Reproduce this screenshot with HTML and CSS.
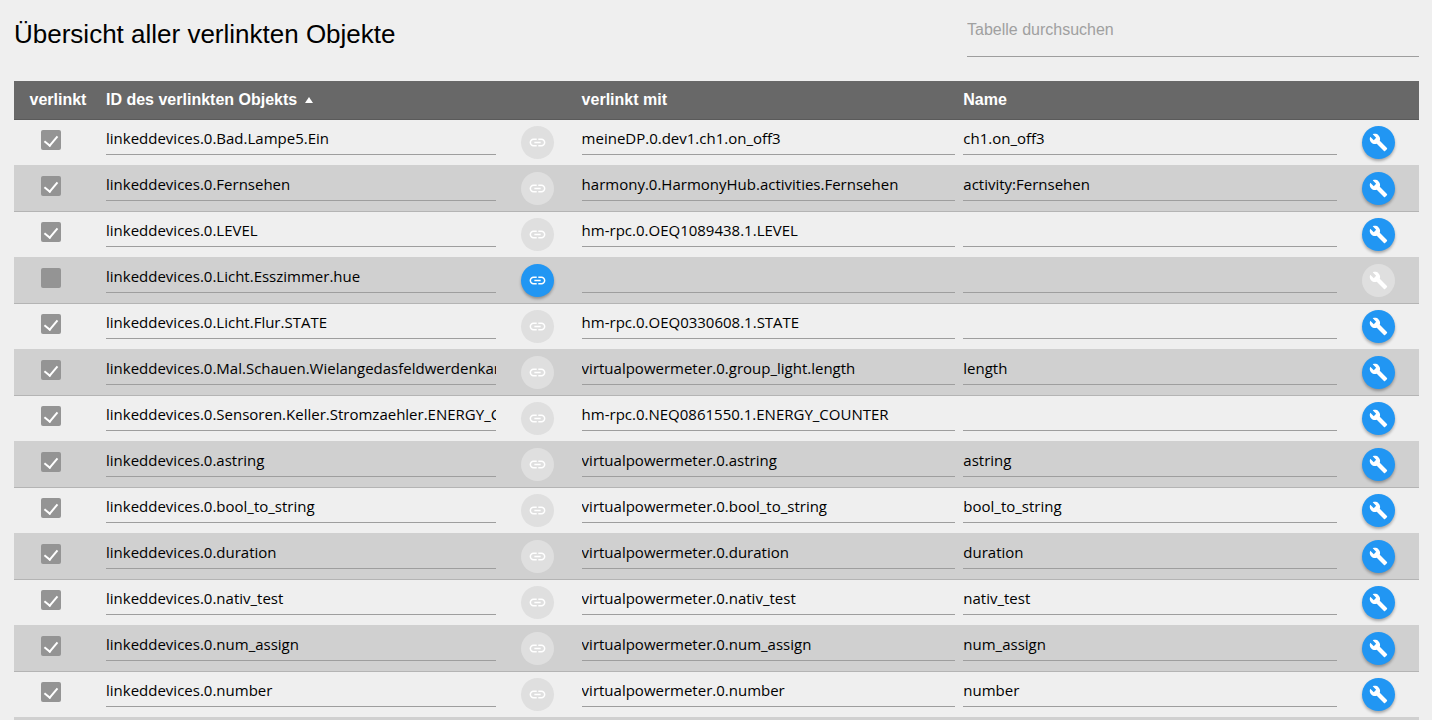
FILE: index.html
```html
<!DOCTYPE html>
<html lang="de">
<head>
<meta charset="utf-8">
<title>Übersicht aller verlinkten Objekte</title>
<link rel="stylesheet" href="styles.css">
</head>
<body>
<svg class="sprite" aria-hidden="true">
  <symbol id="icon-link" viewBox="0 0 24 24"><path d="M3.9 12c0-1.71 1.39-3.1 3.1-3.1h4V7H7c-2.76 0-5 2.24-5 5s2.24 5 5 5h4v-1.9H7c-1.71 0-3.1-1.39-3.1-3.1zM8 13h8v-2H8v2zm9-6h-4v1.9h4c1.71 0 3.1 1.39 3.1 3.1s-1.39 3.1-3.1 3.1h-4V17h4c2.76 0 5-2.24 5-5s-2.24-5-5-5z"/></symbol>
  <symbol id="icon-build" viewBox="0 0 24 24"><path d="M22.7 19l-9.1-9.1c.9-2.3.4-5-1.5-6.9-2-2-5-2.4-7.4-1.3L9 6 6 9 1.6 4.7C.4 7.1.9 10.1 2.9 12.1c1.9 1.9 4.6 2.4 6.9 1.5l9.1 9.1c.4.4 1 .4 1.4 0l2.3-2.3c.5-.4.5-1.1.1-1.4z"/></symbol>
  <symbol id="icon-check" viewBox="0 0 20 20"><path d="M4 11l4 4 8-9" fill="none" stroke="#fff" stroke-width="2"/></symbol>
</svg>
<header class="page-header">
  <h1 class="title">Übersicht aller verlinkten Objekte</h1>
  <input class="search" type="search" placeholder="Tabelle durchsuchen" aria-label="Tabelle durchsuchen">
</header>
<main>
  <table class="objects">
    <colgroup>
      <col class="col-check"><col class="col-id"><col class="col-action"><col><col><col class="col-action">
    </colgroup>
    <thead>
      <tr>
        <th class="head-check" scope="col">verlinkt</th>
        <th scope="col" aria-sort="ascending"><span class="sorted">ID des verlinkten Objekts<svg class="sort-arrow" viewBox="0 0 8 6" aria-hidden="true"><path d="M4 0l4 6H0z"/></svg></span></th>
        <td></td>
        <th scope="col">verlinkt mit</th>
        <th scope="col">Name</th>
        <td></td>
      </tr>
    </thead>
    <tbody id="rows"></tbody>
  </table>
</main>
<script src="app.js"></script>
</body>
</html>
```

FILE: styles.css
```css
* {
  box-sizing: border-box;
}

body {
  height: 100vh;
  margin: 0;
  padding: 12px 13px 0 14px;
  overflow: hidden;
  background: #efefef;
  color: #000;
  font-family: "Liberation Sans", Arial, sans-serif;
  font-size: 16px;
}

.sprite {
  display: none;
}

.page-header {
  display: flex;
  justify-content: space-between;
  height: 69px;
}

.title {
  margin: 0;
  font-size: 26px;
  font-weight: 400;
  line-height: 44px;
}

.search {
  width: 452px;
  height: 45px;
  padding: 0 0 8px;
  border: 0;
  border-bottom: 1px solid #9e9e9e;
  background: transparent;
  font: inherit;
  outline: 0;
}

.search::placeholder {
  color: #a0a0a0;
}

.objects {
  width: 100%;
  table-layout: fixed;
  border-collapse: separate;
  border-spacing: 0;
}

.col-check {
  width: 88px;
}

.col-id {
  width: 28.3%;
}

.col-action {
  width: 78px;
}

.objects thead {
  color: #fff;
}

.objects thead th,
.objects thead td {
  height: 39px;
  padding: 0 4px;
  border-bottom: 1px solid #5a5a5a;
  background: #686868;
  text-align: left;
}

.objects thead .head-check {
  text-align: center;
}

.sorted {
  display: flex;
  align-items: center;
  gap: 8px;
}

.sort-arrow {
  width: 8px;
  height: 6px;
  fill: #fff;
}

.objects tbody td {
  height: 46px;
  padding: 6px 4px 0;
  border-bottom: 1px solid #d0d0d0;
  vertical-align: top;
}

.objects tbody tr:nth-child(even) td {
  border-bottom-color: #b4b4b4;
  background: #d0d0d0;
}

.objects tbody .cell-check {
  padding: 10px 0 0 27px;
}

.objects tbody .cell-action {
  padding: 6px 0 0 21px;
}

.check {
  display: grid;
  place-items: center;
  width: 20px;
  height: 20px;
  margin: 0;
  border-radius: 2px;
  background: #949494;
  appearance: none;
}

.check:checked::before {
  content: "";
  width: 6px;
  height: 11px;
  margin-bottom: 1px;
  border: solid #fff;
  border-width: 0 2px 2px 0;
  transform: rotate(40deg);
}

.field {
  display: block;
  width: 100%;
  height: 29px;
  padding: 0 0 5px;
  border: 0;
  border-bottom: 1px solid #9e9e9e;
  background: transparent;
  color: #000;
  font-family: "Open Sans", "Noto Sans", sans-serif;
  font-size: 15px;
  outline: 0;
}

.round {
  display: grid;
  place-items: center;
  width: 33px;
  height: 33px;
  padding: 0;
  border: 0;
  border-radius: 50%;
  background: #2196f3;
  box-shadow: 0 2px 3px rgba(0, 0, 0, 0.3);
  cursor: pointer;
}

.round:disabled {
  background: #dfdfdf;
  box-shadow: none;
  cursor: default;
}

.icon {
  width: 19px;
  height: 19px;
  fill: #fff;
}
```

FILE: app.js
```javascript
const objects = [
  ["Bad.Lampe5.Ein", "meineDP.0.dev1.ch1.on_off3", "ch1.on_off3"],
  ["Fernsehen", "harmony.0.HarmonyHub.activities.Fernsehen", "activity:Fernsehen"],
  ["LEVEL", "hm-rpc.0.OEQ1089438.1.LEVEL", ""],
  ["Licht.Esszimmer.hue", "", ""],
  ["Licht.Flur.STATE", "hm-rpc.0.OEQ0330608.1.STATE", ""],
  ["Mal.Schauen.Wielangedasfeldwerdenkann", "virtualpowermeter.0.group_light.length", "length"],
  ["Sensoren.Keller.Stromzaehler.ENERGY_COUNTER", "hm-rpc.0.NEQ0861550.1.ENERGY_COUNTER", ""],
  ["astring", "virtualpowermeter.0.astring", "astring"],
  ["bool_to_string", "virtualpowermeter.0.bool_to_string", "bool_to_string"],
  ["duration", "virtualpowermeter.0.duration", "duration"],
  ["nativ_test", "virtualpowermeter.0.nativ_test", "nativ_test"],
  ["num_assign", "virtualpowermeter.0.num_assign", "num_assign"],
  ["number", "virtualpowermeter.0.number", "number"],
  ["", "", ""]
];

const field = (label, value) =>
  `<td><input class="field" type="text" aria-label="${label}" value="${value}" readonly></td>`;

const action = (label, icon, enabled) =>
  `<td class="cell-action"><button class="round" type="button" aria-label="${label}"${enabled ? "" : " disabled"}>` +
  `<svg class="icon" aria-hidden="true"><use href="#${icon}"/></svg></button></td>`;

document.getElementById("rows").innerHTML = objects.map(([id, target, name]) => {
  const linked = target !== "";
  return "<tr>" +
    `<td class="cell-check"><input class="check" type="checkbox" aria-label="verlinkt"${linked ? " checked" : ""}></td>` +
    field("ID des verlinkten Objekts", id && "linkeddevices.0." + id) +
    action("Verlinken", "icon-link", !linked) +
    field("verlinkt mit", target) +
    field("Name", name) +
    action("Bearbeiten", "icon-build", linked) +
    "</tr>";
}).join("");
```
